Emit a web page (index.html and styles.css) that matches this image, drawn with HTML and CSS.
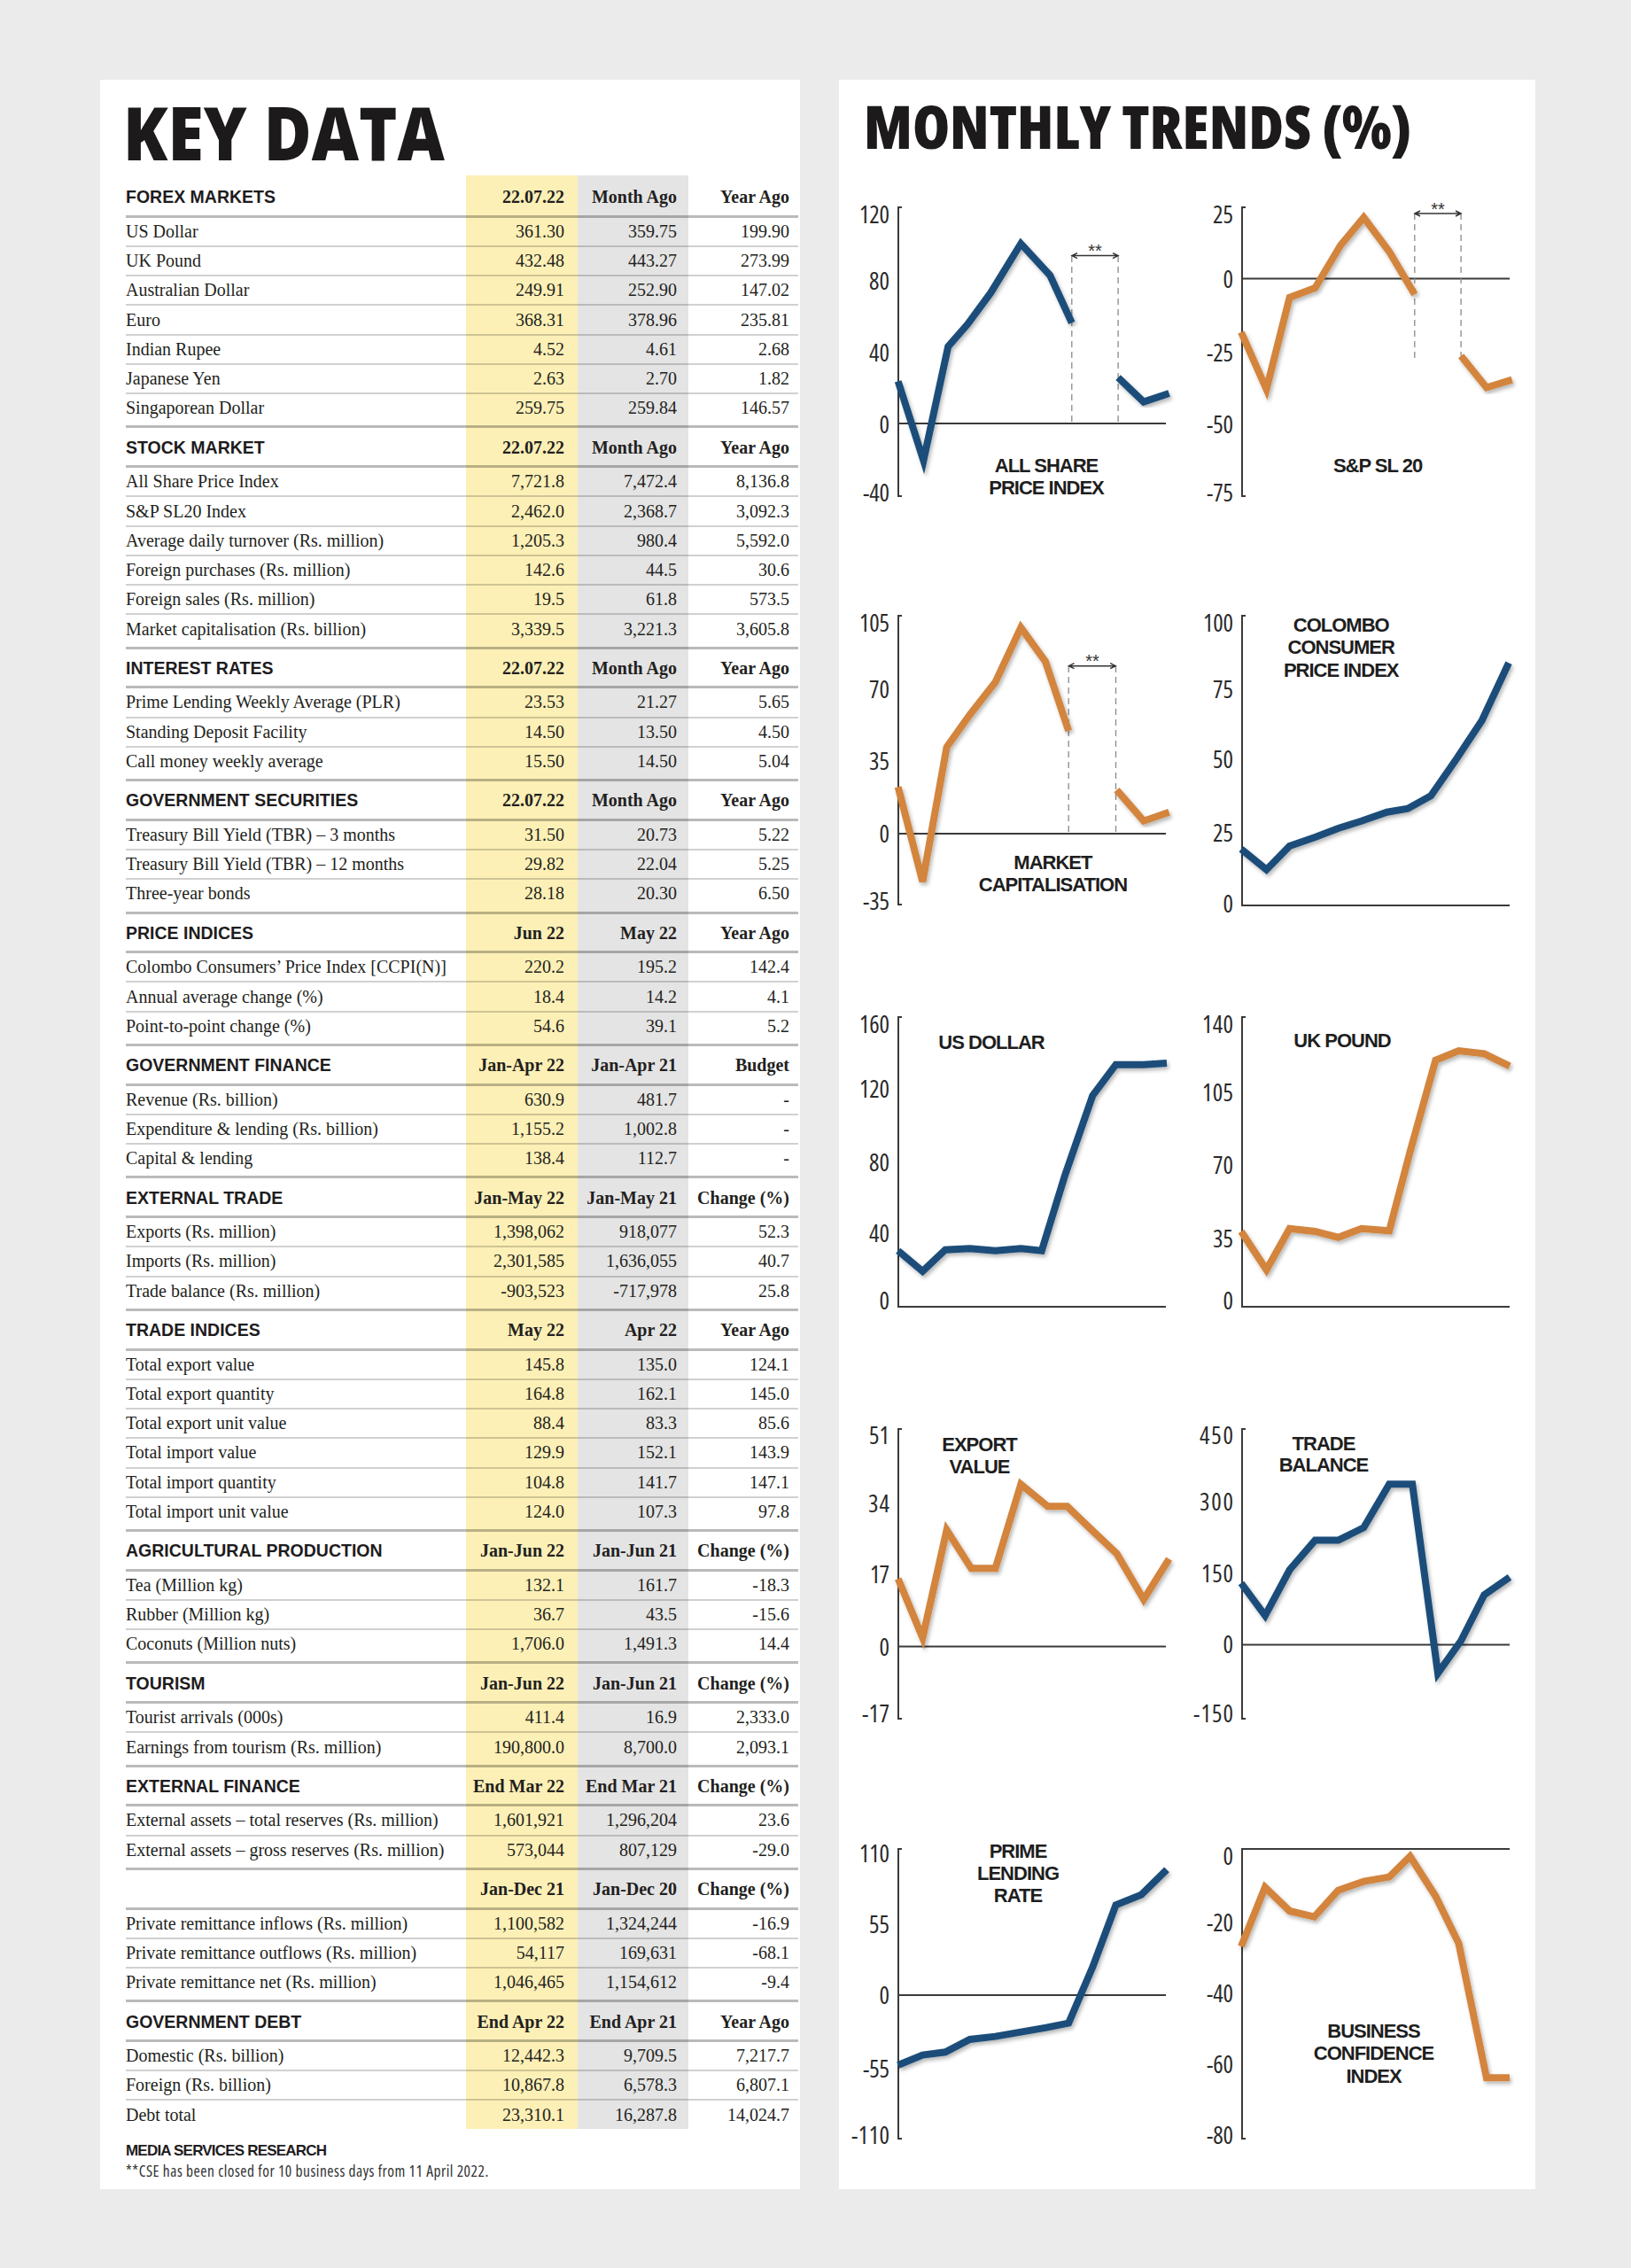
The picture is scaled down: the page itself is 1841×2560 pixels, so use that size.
FILE: index.html
```html
<!DOCTYPE html>
<html lang="en">
<head>
<meta charset="utf-8">
<title>Key Data / Monthly Trends</title>
<link rel="stylesheet" href="styles.css">
</head>
<body>
<div class="page">
  <div class="panel kd">
    <h1 class="kd-title">KEY DATA</h1>
    <div class="tbl">
      <div class="sec">
        <div class="hd"><span>FOREX MARKETS</span><span>22.07.22</span><span>Month Ago</span><span>Year Ago</span></div>
        <div class="r"><span>US Dollar</span><span>361.30</span><span>359.75</span><span>199.90</span></div>
        <div class="r"><span>UK Pound</span><span>432.48</span><span>443.27</span><span>273.99</span></div>
        <div class="r"><span>Australian Dollar</span><span>249.91</span><span>252.90</span><span>147.02</span></div>
        <div class="r"><span>Euro</span><span>368.31</span><span>378.96</span><span>235.81</span></div>
        <div class="r"><span>Indian Rupee</span><span>4.52</span><span>4.61</span><span>2.68</span></div>
        <div class="r"><span>Japanese Yen</span><span>2.63</span><span>2.70</span><span>1.82</span></div>
        <div class="r"><span>Singaporean Dollar</span><span>259.75</span><span>259.84</span><span>146.57</span></div>
      </div>
      <div class="sec">
        <div class="hd"><span>STOCK MARKET</span><span>22.07.22</span><span>Month Ago</span><span>Year Ago</span></div>
        <div class="r"><span>All Share Price Index</span><span>7,721.8</span><span>7,472.4</span><span>8,136.8</span></div>
        <div class="r"><span>S&amp;P SL20 Index</span><span>2,462.0</span><span>2,368.7</span><span>3,092.3</span></div>
        <div class="r"><span>Average daily turnover (Rs. million)</span><span>1,205.3</span><span>980.4</span><span>5,592.0</span></div>
        <div class="r"><span>Foreign purchases (Rs. million)</span><span>142.6</span><span>44.5</span><span>30.6</span></div>
        <div class="r"><span>Foreign sales (Rs. million)</span><span>19.5</span><span>61.8</span><span>573.5</span></div>
        <div class="r"><span>Market capitalisation (Rs. billion)</span><span>3,339.5</span><span>3,221.3</span><span>3,605.8</span></div>
      </div>
      <div class="sec">
        <div class="hd"><span>INTEREST RATES</span><span>22.07.22</span><span>Month Ago</span><span>Year Ago</span></div>
        <div class="r"><span>Prime Lending Weekly Average (PLR)</span><span>23.53</span><span>21.27</span><span>5.65</span></div>
        <div class="r"><span>Standing Deposit Facility</span><span>14.50</span><span>13.50</span><span>4.50</span></div>
        <div class="r"><span>Call money weekly average</span><span>15.50</span><span>14.50</span><span>5.04</span></div>
      </div>
      <div class="sec">
        <div class="hd"><span>GOVERNMENT SECURITIES</span><span>22.07.22</span><span>Month Ago</span><span>Year Ago</span></div>
        <div class="r"><span>Treasury Bill Yield (TBR) – 3 months</span><span>31.50</span><span>20.73</span><span>5.22</span></div>
        <div class="r"><span>Treasury Bill Yield (TBR) – 12 months</span><span>29.82</span><span>22.04</span><span>5.25</span></div>
        <div class="r"><span>Three-year bonds</span><span>28.18</span><span>20.30</span><span>6.50</span></div>
      </div>
      <div class="sec">
        <div class="hd"><span>PRICE INDICES</span><span>Jun 22</span><span>May 22</span><span>Year Ago</span></div>
        <div class="r"><span>Colombo Consumers’ Price Index [CCPI(N)]</span><span>220.2</span><span>195.2</span><span>142.4</span></div>
        <div class="r"><span>Annual average change (%)</span><span>18.4</span><span>14.2</span><span>4.1</span></div>
        <div class="r"><span>Point-to-point change (%)</span><span>54.6</span><span>39.1</span><span>5.2</span></div>
      </div>
      <div class="sec">
        <div class="hd"><span>GOVERNMENT FINANCE</span><span>Jan-Apr 22</span><span>Jan-Apr 21</span><span>Budget</span></div>
        <div class="r"><span>Revenue (Rs. billion)</span><span>630.9</span><span>481.7</span><span>-</span></div>
        <div class="r"><span>Expenditure &amp; lending (Rs. billion)</span><span>1,155.2</span><span>1,002.8</span><span>-</span></div>
        <div class="r"><span>Capital &amp; lending</span><span>138.4</span><span>112.7</span><span>-</span></div>
      </div>
      <div class="sec">
        <div class="hd"><span>EXTERNAL TRADE</span><span>Jan-May 22</span><span>Jan-May 21</span><span>Change (%)</span></div>
        <div class="r"><span>Exports (Rs. million)</span><span>1,398,062</span><span>918,077</span><span>52.3</span></div>
        <div class="r"><span>Imports (Rs. million)</span><span>2,301,585</span><span>1,636,055</span><span>40.7</span></div>
        <div class="r"><span>Trade balance (Rs. million)</span><span>-903,523</span><span>-717,978</span><span>25.8</span></div>
      </div>
      <div class="sec">
        <div class="hd"><span>TRADE INDICES</span><span>May 22</span><span>Apr 22</span><span>Year Ago</span></div>
        <div class="r"><span>Total export value</span><span>145.8</span><span>135.0</span><span>124.1</span></div>
        <div class="r"><span>Total export quantity</span><span>164.8</span><span>162.1</span><span>145.0</span></div>
        <div class="r"><span>Total export unit value</span><span>88.4</span><span>83.3</span><span>85.6</span></div>
        <div class="r"><span>Total import value</span><span>129.9</span><span>152.1</span><span>143.9</span></div>
        <div class="r"><span>Total import quantity</span><span>104.8</span><span>141.7</span><span>147.1</span></div>
        <div class="r"><span>Total import unit value</span><span>124.0</span><span>107.3</span><span>97.8</span></div>
      </div>
      <div class="sec">
        <div class="hd"><span>AGRICULTURAL PRODUCTION</span><span>Jan-Jun 22</span><span>Jan-Jun 21</span><span>Change (%)</span></div>
        <div class="r"><span>Tea (Million kg)</span><span>132.1</span><span>161.7</span><span>-18.3</span></div>
        <div class="r"><span>Rubber (Million kg)</span><span>36.7</span><span>43.5</span><span>-15.6</span></div>
        <div class="r"><span>Coconuts (Million nuts)</span><span>1,706.0</span><span>1,491.3</span><span>14.4</span></div>
      </div>
      <div class="sec">
        <div class="hd"><span>TOURISM</span><span>Jan-Jun 22</span><span>Jan-Jun 21</span><span>Change (%)</span></div>
        <div class="r"><span>Tourist arrivals (000s)</span><span>411.4</span><span>16.9</span><span>2,333.0</span></div>
        <div class="r"><span>Earnings from tourism (Rs. million)</span><span>190,800.0</span><span>8,700.0</span><span>2,093.1</span></div>
      </div>
      <div class="sec">
        <div class="hd"><span>EXTERNAL FINANCE</span><span>End Mar 22</span><span>End Mar 21</span><span>Change (%)</span></div>
        <div class="r"><span>External assets – total reserves (Rs. million)</span><span>1,601,921</span><span>1,296,204</span><span>23.6</span></div>
        <div class="r"><span>External assets – gross reserves (Rs. million)</span><span>573,044</span><span>807,129</span><span>-29.0</span></div>
      </div>
      <div class="sec">
        <div class="hd"><span></span><span>Jan-Dec 21</span><span>Jan-Dec 20</span><span>Change (%)</span></div>
        <div class="r"><span>Private remittance inflows (Rs. million)</span><span>1,100,582</span><span>1,324,244</span><span>-16.9</span></div>
        <div class="r"><span>Private remittance outflows (Rs. million)</span><span>54,117</span><span>169,631</span><span>-68.1</span></div>
        <div class="r"><span>Private remittance net (Rs. million)</span><span>1,046,465</span><span>1,154,612</span><span>-9.4</span></div>
      </div>
      <div class="sec">
        <div class="hd"><span>GOVERNMENT DEBT</span><span>End Apr 22</span><span>End Apr 21</span><span>Year Ago</span></div>
        <div class="r"><span>Domestic (Rs. billion)</span><span>12,442.3</span><span>9,709.5</span><span>7,217.7</span></div>
        <div class="r"><span>Foreign (Rs. billion)</span><span>10,867.8</span><span>6,578.3</span><span>6,807.1</span></div>
        <div class="r"><span>Debt total</span><span>23,310.1</span><span>16,287.8</span><span>14,024.7</span></div>
      </div>
    </div>
    <p class="src">MEDIA SERVICES RESEARCH</p>
    <p class="note">**CSE has been closed for 10 business days from 11 April 2022.</p>
  </div>

  <div class="panel mt">
    <h1 class="mt-title">MONTHLY TRENDS (%)</h1>
    <svg class="defs" width="0" height="0" aria-hidden="true">
      <defs>
        <filter id="sh" x="-10%" y="-10%" width="130%" height="130%">
          <feDropShadow dx="2" dy="3" stdDeviation="2.2" flood-color="#000" flood-opacity="0.28"/>
        </filter>
      </defs>
    </svg>
    <div class="charts">
      <!-- 1 ALL SHARE -->
      <svg class="ch" viewBox="0 0 385 370">
        <path class="ax" d="M58 20H54V346H58"/>
        <line class="ax" x1="54" y1="264" x2="356" y2="264"/>
        <text class="yl" x="44" y="38" textLength="34">120</text>
        <text class="yl" x="44" y="113" textLength="23">80</text>
        <text class="yl" x="44" y="194" textLength="23">40</text>
        <text class="yl" x="44" y="275" textLength="11.5">0</text>
        <text class="yl" x="44" y="352" textLength="30">-40</text>
        <line class="dash" x1="249.8" y1="75" x2="249.8" y2="264"/>
        <line class="dash" x1="302.1" y1="75" x2="302.1" y2="264"/>
        <path class="brk" d="M250 74.6H302M256 71.6L250 74.6L256 77.6M296 71.6L302 74.6L296 77.6"/>
        <text class="ast" x="276" y="76">**</text>
        <polyline class="ln blue" points="53.7,216.4 82.4,305.7 110.2,177.1 132.1,152.1 158.3,116.4 192.3,61 225.2,96.8 249.8,150.3"/>
        <polyline class="ln blue" points="302.1,212.1 330.9,239.6 359.6,230"/>
        <text class="ttl" x="221" y="319">ALL SHARE</text>
        <text class="ttl" x="221" y="344">PRICE INDEX</text>
      </svg>
      <!-- 2 S&P SL 20 -->
      <svg class="ch" viewBox="0 0 385 370">
        <path class="ax" d="M58 20H54V346H58"/>
        <line class="ax" x1="54" y1="100.5" x2="356" y2="100.5"/>
        <text class="yl" x="44" y="38" textLength="23">25</text>
        <text class="yl" x="44" y="111" textLength="11.5">0</text>
        <text class="yl" x="44" y="194" textLength="30">-25</text>
        <text class="yl" x="44" y="275" textLength="30">-50</text>
        <text class="yl" x="44" y="352" textLength="30">-75</text>
        <line class="dash" x1="248.8" y1="27" x2="248.8" y2="195"/>
        <line class="dash" x1="301.1" y1="27" x2="301.1" y2="188"/>
        <path class="brk" d="M249 27H301M255 24L249 27L255 30M295 24L301 27L295 30"/>
        <text class="ast" x="275" y="28.5">**</text>
        <polyline class="ln org" points="53,161 81.5,225.3 107.6,121.8 136.4,111 165.2,62.8 191.3,31.4 220.1,70 248.8,118.2"/>
        <polyline class="ln org" points="301.1,187.8 329.9,223.5 358.7,214.6"/>
        <text class="ttl" x="207" y="319">S&amp;P SL 20</text>
      </svg>
      <!-- 3 MARKET CAP -->
      <svg class="ch" viewBox="0 0 385 370">
        <path class="ax" d="M58 20H54V346H58"/>
        <line class="ax" x1="54" y1="266" x2="356" y2="266"/>
        <text class="yl" x="44" y="38" textLength="34">105</text>
        <text class="yl" x="44" y="113" textLength="23">70</text>
        <text class="yl" x="44" y="194" textLength="23">35</text>
        <text class="yl" x="44" y="276" textLength="11.5">0</text>
        <text class="yl" x="44" y="352" textLength="30">-35</text>
        <line class="dash" x1="246.2" y1="77" x2="246.2" y2="266"/>
        <line class="dash" x1="299.5" y1="77" x2="299.5" y2="266"/>
        <path class="brk" d="M246.5 76.7H299.2M252.5 73.7L246.5 76.7L252.5 79.7M293.2 73.7L299.2 76.7L293.2 79.7"/>
        <text class="ast" x="273" y="78.2">**</text>
        <polyline class="ln org" points="53.7,213.3 81.4,320 108.6,168.3 134.7,131.7 163.5,95 192.3,33.3 220,71.7 246.2,150"/>
        <polyline class="ln org" points="300.5,216.7 330.9,251.7 359.6,241.7"/>
        <text class="ttl" x="228.4" y="306">MARKET</text>
        <text class="ttl" x="228.4" y="331">CAPITALISATION</text>
      </svg>
      <!-- 4 CCPI -->
      <svg class="ch" viewBox="0 0 385 370">
        <path class="ax" d="M58 20H54V347H356"/>
        <text class="yl" x="44" y="38" textLength="34">100</text>
        <text class="yl" x="44" y="113" textLength="23">75</text>
        <text class="yl" x="44" y="192" textLength="23">50</text>
        <text class="yl" x="44" y="275" textLength="23">25</text>
        <text class="yl" x="44" y="355" textLength="11.5">0</text>
        <polyline class="ln blue" points="53,283.3 81.5,306.7 107.6,280 136.4,270 162.5,260 188.7,251.7 217.5,241.7 241,237.7 267.1,223.3 295.9,181.7 324.7,138.3 355,73.3"/>
        <text class="ttl" x="165.7" y="37.6">COLOMBO</text>
        <text class="ttl" x="165.7" y="63.3">CONSUMER</text>
        <text class="ttl" x="165.7" y="88.6">PRICE INDEX</text>
      </svg>
      <!-- 5 US DOLLAR -->
      <svg class="ch" viewBox="0 0 385 370">
        <path class="ax" d="M58 20H54V347H356"/>
        <text class="yl" x="44" y="38" textLength="34">160</text>
        <text class="yl" x="44" y="111" textLength="34">120</text>
        <text class="yl" x="44" y="194" textLength="23">80</text>
        <text class="yl" x="44" y="274" textLength="23">40</text>
        <text class="yl" x="44" y="350" textLength="11.5">0</text>
        <polyline class="ln blue" points="53.7,283.7 81.4,307 107,282.7 134.7,281.3 163.5,283.7 192.3,281.3 215.8,283.7 242,198.7 273.3,108.7 299.5,73.7 330.9,73.7 357,72"/>
        <text class="ttl" x="159" y="56.3">US DOLLAR</text>
      </svg>
      <!-- 6 UK POUND -->
      <svg class="ch" viewBox="0 0 385 370">
        <path class="ax" d="M58 20H54V347H356"/>
        <text class="yl" x="44" y="38" textLength="35">140</text>
        <text class="yl" x="44" y="115" textLength="35">105</text>
        <text class="yl" x="44" y="197" textLength="23">70</text>
        <text class="yl" x="44" y="280" textLength="23">35</text>
        <text class="yl" x="44" y="350" textLength="11.5">0</text>
        <polyline class="ln org" points="53,262 81.5,305.3 107.6,258.7 136.4,262 162.5,268.7 188.7,258.7 220.1,261.3 243.6,172 272.4,68.7 298.5,58 327.3,61.3 356,75.3"/>
        <text class="ttl" x="167" y="53.6">UK POUND</text>
      </svg>
      <!-- 7 EXPORT VALUE -->
      <svg class="ch" viewBox="0 0 385 370">
        <path class="ax" d="M58 20H54V347H58"/>
        <line class="ax" x1="54" y1="265.6" x2="356" y2="265.6"/>
        <text class="yl" x="44" y="37" textLength="23">51</text>
        <text class="yl" x="44" y="114" textLength="24">34</text>
        <text class="yl" x="44" y="194" textLength="22">17</text>
        <text class="yl" x="44" y="275.6" textLength="11.5">0</text>
        <text class="yl" x="44" y="350.6" textLength="31">-17</text>
        <polyline class="ln org" points="53.7,189 81.4,255.6 108.6,134 136.3,177.3 163.5,177.3 192.3,82.3 222.6,107.3 244.6,107.3 272.3,134 300.5,160.6 330.9,212.3 359.6,166.6"/>
        <text class="ttl" x="145.5" y="44.9">EXPORT</text>
        <text class="ttl" x="145.5" y="69.9">VALUE</text>
      </svg>
      <!-- 8 TRADE BALANCE -->
      <svg class="ch" viewBox="0 0 385 370">
        <path class="ax" d="M58 20H54V347H58"/>
        <line class="ax" x1="54" y1="263.5" x2="356" y2="263.5"/>
        <text class="yl" x="44" y="37" textLength="38">450</text>
        <text class="yl" x="44" y="112" textLength="38">300</text>
        <text class="yl" x="44" y="193" textLength="36">150</text>
        <text class="yl" x="44" y="273" textLength="12">0</text>
        <text class="yl" x="44" y="350.6" textLength="45">-150</text>
        <polyline class="ln blue" points="53,194 80,230.6 107.6,179 136.4,145.6 162.5,145.6 191.3,131.3 220.1,82.3 246.2,82.3 275,295.6 301.1,259 327.3,207.3 356,187.3"/>
        <text class="ttl" x="146" y="44.2">TRADE</text>
        <text class="ttl" x="146" y="67.6">BALANCE</text>
      </svg>
      <!-- 9 PRIME LENDING -->
      <svg class="ch" viewBox="0 0 385 370">
        <path class="ax" d="M58 20H54V347H58"/>
        <line class="ax" x1="54" y1="185" x2="356" y2="185"/>
        <text class="yl" x="44" y="35" textLength="34">110</text>
        <text class="yl" x="44" y="115" textLength="23">55</text>
        <text class="yl" x="44" y="195" textLength="11.5">0</text>
        <text class="yl" x="44" y="278" textLength="30">-55</text>
        <text class="yl" x="44" y="353" textLength="43">-110</text>
        <polyline class="ln blue" points="53.7,264 81.4,252.6 107,249.3 134.7,235 163.5,231.6 192.3,226.6 221,221.6 246.2,216.6 273.3,153.3 299.5,83.3 328.3,71.6 357,43.3"/>
        <text class="ttl" x="189" y="30.2">PRIME</text>
        <text class="ttl" x="189" y="54.9">LENDING</text>
        <text class="ttl" x="189" y="80.2">RATE</text>
      </svg>
      <!-- 10 BUSINESS CONFIDENCE -->
      <svg class="ch" viewBox="0 0 385 370">
        <path class="ax" d="M356 20H54V347H58"/>
        <text class="yl" x="44" y="38" textLength="11.5">0</text>
        <text class="yl" x="44" y="113" textLength="30">-20</text>
        <text class="yl" x="44" y="193" textLength="30">-40</text>
        <text class="yl" x="44" y="272.6" textLength="30">-60</text>
        <text class="yl" x="44" y="352.6" textLength="30">-80</text>
        <polyline class="ln org" points="53,130 79.9,63.3 107.6,90 135.4,96.6 162.5,66.6 191.3,56.6 220.1,51.6 243.6,28.3 272.4,73.3 298.5,126.6 329.9,278.3 356,278.3"/>
        <text class="ttl" x="202.5" y="232.6">BUSINESS</text>
        <text class="ttl" x="202.5" y="258.2">CONFIDENCE</text>
        <text class="ttl" x="202.5" y="283.6">INDEX</text>
      </svg>
    </div>
  </div>
</div>
</body>
</html>
```

FILE: styles.css
```css
* { box-sizing: border-box; margin: 0; padding: 0; }

body {
  background: #ebebeb;
  width: 1841px;
  height: 2560px;
  overflow: hidden;
  color: #231f20;
}

.page {
  display: flex;
  gap: 44px;
  padding: 90px 0 0 113px;
}

.panel {
  background: #fff;
  height: 2381px;
}

/* ---------- KEY DATA ---------- */
.kd {
  width: 790px;
  padding: 17px 2px 0 29px;
}

.kd-title {
  font-family: "Open Sans", "Liberation Sans", sans-serif;
  font-weight: 800;
  font-size: 84px;
  line-height: 84px;
  margin-left: -3px;
  margin-bottom: 7px;
  color: #1c1a1b;
  transform: scaleX(0.875);
  transform-origin: 0 0;
}

.tbl {
  width: 759px;
  background: linear-gradient(to right,
    transparent 384px, #fcf0b6 384px, #fcf0b6 510px,
    #e4e4e4 510px, #e4e4e4 635px, transparent 635px);
}

.hd, .r {
  display: grid;
  grid-template-columns: 384px 126px 125px 124px;
  align-items: center;
}

.hd {
  height: 47.7px;
  border-top: 3px solid rgba(0, 0, 0, 0.27);
  border-bottom: 3px solid rgba(0, 0, 0, 0.27);
  padding-top: 2px;
}

.sec:first-child .hd { border-top-color: transparent; }

.hd span:first-child {
  font: bold 19.5px "Liberation Sans", sans-serif;
  color: #1e1c1d;
}

.hd span + span {
  font: bold 20px "Liberation Serif", serif;
}

.r {
  height: 33.25px;
  border-bottom: 2px solid rgba(0, 0, 0, 0.18);
  font: 20px "Liberation Serif", serif;
}

.r:last-child {
  border-bottom: 0;
  height: 35.25px;
  padding-bottom: 4px;
}

.sec:last-child .r:last-child {
  height: 31.25px;
  padding-bottom: 0;
}

.hd span:nth-child(n+2), .r span:nth-child(n+2) { text-align: right; }
.hd span:nth-child(2), .r span:nth-child(2) { padding-right: 15px; }
.hd span:nth-child(3), .r span:nth-child(3) { padding-right: 13px; }
.hd span:nth-child(4), .r span:nth-child(4) { padding-right: 10px; }

.src {
  margin-top: 14px;
  font: bold 17px/22px "Liberation Sans", sans-serif;
  letter-spacing: -0.8px;
  color: #1e1c1d;
}

.note {
  font-family: "Open Sans", "Liberation Sans", sans-serif;
  font-stretch: 75%;
  font-size: 17.5px;
  line-height: 22px;
  letter-spacing: 0.5px;
  color: #333;
}

/* ---------- MONTHLY TRENDS ---------- */
.mt {
  width: 786px;
  padding: 18px 0 0 13px;
}

.mt-title {
  font-family: "Open Sans", "Liberation Sans", sans-serif;
  font-weight: 800;
  font-stretch: 75%;
  font-size: 68px;
  line-height: 68px;
  margin-left: 15px;
  color: #1c1a1b;
}

.defs { position: absolute; }

.charts {
  display: grid;
  grid-template-columns: 385px 385px;
  column-gap: 3px;
  grid-template-rows: 461px 453px 465px 474px 370px;
  margin-top: 38px;
}

.ch {
  width: 385px;
  height: 370px;
  overflow: visible;
  display: block;
}

.ax { fill: none; stroke: #3a3a3a; stroke-width: 2; }

.yl {
  font-family: "Open Sans", "Liberation Sans", sans-serif;
  font-stretch: 75%;
  font-size: 27px;
  fill: #2a2a2a;
  text-anchor: end;
  lengthAdjust: spacingAndGlyphs;
}

.ttl {
  font: bold 22px "Liberation Sans", sans-serif;
  letter-spacing: -1px;
  fill: #1e1e1e;
  text-anchor: middle;
}

.ln {
  fill: none;
  stroke-width: 8;
  stroke-linejoin: miter;
  filter: url(#sh);
}

.blue { stroke: #1b4d7a; }
.org { stroke: #d3843d; }

.dash { stroke: #8a8a8a; stroke-width: 1.3; stroke-dasharray: 7 5; }
.brk { fill: none; stroke: #333; stroke-width: 1.5; }
.ast { font: 20px "Liberation Sans", sans-serif; fill: #333; text-anchor: middle; }
```
